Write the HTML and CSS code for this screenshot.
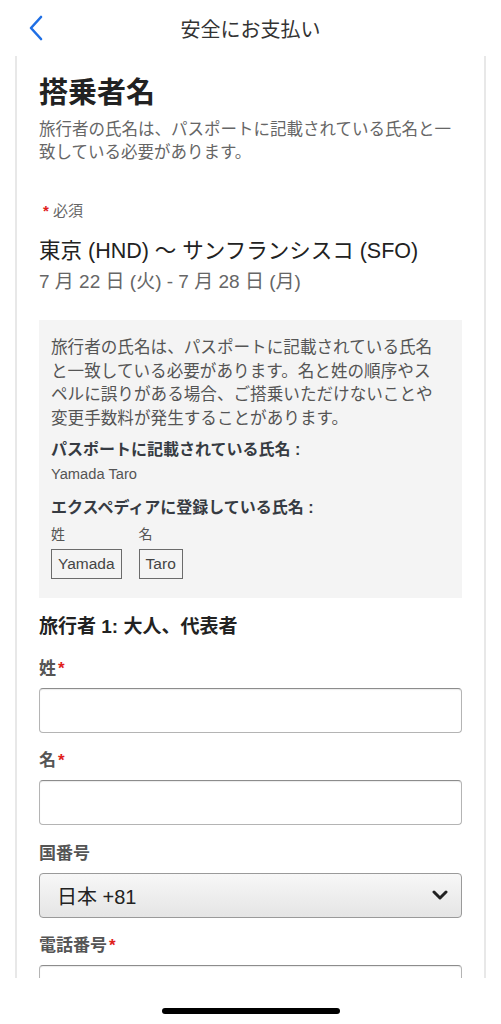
FILE: index.html
```html
<!DOCTYPE html>
<html lang="ja">
<head>
  <meta charset="UTF-8">
  <meta name="viewport" content="width=device-width, initial-scale=1.0">
  <title>安全にお支払い</title>
  <link rel="stylesheet" href="styles.css">
</head>
<body>
  <header class="topbar">
    <svg class="back" width="16" height="26" viewBox="0 0 16 26" aria-hidden="true">
      <path d="M13 2 L3 13 L13 24" fill="none" stroke="#1f6fe5" stroke-width="2.6" stroke-linecap="round" stroke-linejoin="round"/>
    </svg>
    <div class="topbar-title">安全にお支払い</div>
  </header>

  <main class="viewport">
    <section class="card">
      <h1 class="title">搭乗者名</h1>
      <p class="subtitle">旅行者の氏名は、パスポートに記載されている氏名と一致している必要があります。</p>

      <div class="required"><span class="star">*</span> 必須</div>
      <div class="route">東京 (HND) 〜 サンフランシスコ (SFO)</div>
      <div class="dates">7 月 22 日 (火) - 7 月 28 日 (月)</div>

      <div class="notice">
        <p class="notice-text">旅行者の氏名は、パスポートに記載されている氏名と一致している必要があります。名と姓の順序やスペルに誤りがある場合、ご搭乗いただけないことや変更手数料が発生することがあります。</p>
        <div class="notice-label">パスポートに記載されている氏名 :</div>
        <div class="notice-value">Yamada Taro</div>
        <div class="notice-label second">エクスペディアに登録している氏名 :</div>
        <div class="name-cols">
          <div class="name-col">
            <div class="name-head">姓</div>
            <div class="name-box">Yamada</div>
          </div>
          <div class="name-col">
            <div class="name-head">名</div>
            <div class="name-box">Taro</div>
          </div>
        </div>
      </div>

      <h2 class="traveler">旅行者 1: 大人、代表者</h2>

      <div class="field">
        <label class="field-label" for="last">姓<span class="star">*</span></label>
        <input class="text-input" id="last" type="text">
      </div>
      <div class="field">
        <label class="field-label" for="first">名<span class="star">*</span></label>
        <input class="text-input" id="first" type="text">
      </div>
      <div class="field">
        <div class="field-label">国番号</div>
        <div class="select">
          <span>日本 +81</span>
          <svg width="16" height="10" viewBox="0 0 16 10" aria-hidden="true">
            <path d="M2 2 L8 8 L14 2" fill="none" stroke="#222" stroke-width="3" stroke-linecap="round" stroke-linejoin="round"/>
          </svg>
        </div>
      </div>
      <div class="field">
        <label class="field-label" for="phone">電話番号<span class="star">*</span></label>
        <input class="text-input" id="phone" type="tel">
      </div>
    </section>
  </main>

  <footer class="homebar">
    <div class="home-indicator"></div>
  </footer>
</body>
</html>
```

FILE: styles.css
```css
body {
  margin: 0;
  background: #fff;
  font-family: "Liberation Sans", "Noto Sans CJK JP", sans-serif;
  color: #222;
  height: 1024px;
  display: flex;
  flex-direction: column;
  overflow: hidden;
}
.topbar {
  height: 56px;
  flex: none;
  display: flex;
  align-items: center;
  justify-content: center;
  position: relative;
}
.back {
  position: absolute;
  left: 28px;
  top: 15px;
}
.topbar-title {
  font-size: 20px;
  color: #333;
}
.viewport {
  height: 922px;
  flex: none;
  overflow: hidden;
}
.card {
  margin: 0 15px;
  border-left: 2px solid #e8e8e8;
  border-right: 2px solid #e8e8e8;
  padding: 19px 22px 40px;
}
.title {
  margin: 0;
  font-size: 29px;
  line-height: 36px;
  font-weight: bold;
  color: #222;
}
.subtitle {
  margin: 7px 0 0;
  font-size: 16.5px;
  line-height: 23px;
  color: #666;
}
.required {
  margin-top: 37px;
  font-size: 15px;
  line-height: 20px;
  color: #666;
}
.star {
  color: #e0201b;
  font-weight: bold;
  margin-left: 2px;
}
.required .star {
  margin: 0 0 0 4px;
}
.route {
  margin-top: 16px;
  font-size: 21.5px;
  line-height: 28px;
  color: #222;
}
.dates {
  margin-top: 4px;
  font-size: 19px;
  line-height: 26px;
  color: #666;
}
.notice {
  margin-top: 25px;
  background: #f4f4f4;
  padding: 16px 21px 19px 12px;
}
.notice-text {
  margin: 0;
  font-size: 16.6px;
  line-height: 23.5px;
  color: #555;
}
.notice-label {
  margin-top: 9px;
  font-size: 16px;
  line-height: 22px;
  font-weight: bold;
  color: #363b42;
}
.notice-label.second {
  margin-top: 13px;
}
.notice-value {
  margin-top: 3px;
  font-size: 14.7px;
  line-height: 20px;
  color: #555;
}
.name-cols {
  margin-top: 5px;
  display: flex;
  gap: 17px;
}
.name-head {
  font-size: 14px;
  line-height: 20px;
  color: #555;
}
.name-box {
  margin-top: 5px;
  height: 30px;
  box-sizing: border-box;
  border: 1px solid #6b6b6b;
  padding: 0 6px;
  font-size: 15.5px;
  line-height: 28px;
  color: #444;
}
.traveler {
  margin: 16px 0 0;
  font-size: 19px;
  line-height: 26px;
  font-weight: bold;
  color: #222;
}
.field {
  margin-top: 17.5px;
}
.field-label {
  display: block;
  font-size: 17px;
  line-height: 22px;
  font-weight: bold;
  color: #555;
}
.text-input {
  display: block;
  margin-top: 8px;
  width: 100%;
  height: 45px;
  box-sizing: border-box;
  border: 1px solid #b4b4b4;
  border-top-color: #8c8c8c;
  border-radius: 4px;
  box-shadow: inset 0 1px 1px rgba(0, 0, 0, 0.08);
  background: #fff;
}
.select {
  margin-top: 8px;
  height: 45px;
  box-sizing: border-box;
  border: 1px solid #9a9a9a;
  border-radius: 4px;
  background: linear-gradient(#f7f7f7, #e5e5e5);
  display: flex;
  align-items: center;
  justify-content: space-between;
  padding: 0 13px 0 17px;
  font-size: 20px;
  color: #222;
}
.homebar {
  flex: 1;
  display: flex;
  align-items: flex-start;
  justify-content: center;
  padding-top: 30px;
}
.home-indicator {
  width: 178px;
  height: 6px;
  border-radius: 3px;
  background: #000;
}
```
